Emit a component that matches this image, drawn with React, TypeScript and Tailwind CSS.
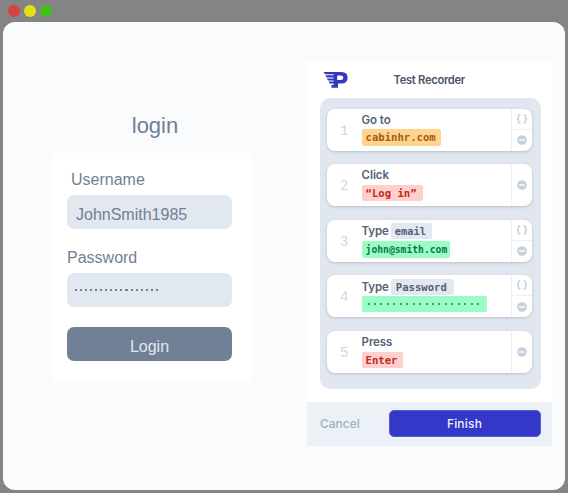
import type { ReactNode } from "react";

const MONO = "font-['DejaVu_Sans_Mono',monospace] font-bold";

function Braces() {
  return (
    <svg width="12" height="10" viewBox="0 0 12 10" fill="none" stroke="#c3cedb" strokeWidth="1.4">
      <path d="M4.4 1H3.7Q2.5 1 2.5 2.1V3.5Q2.5 5 1 5Q2.5 5 2.5 6.5V7.9Q2.5 9 3.7 9H4.4" />
      <path d="M7.6 1H8.3Q9.5 1 9.5 2.1V3.5Q9.5 5 11 5Q9.5 5 9.5 6.5V7.9Q9.5 9 8.3 9H7.6" />
    </svg>
  );
}

function Minus() {
  return (
    <svg width="10" height="10" viewBox="0 0 10 10">
      <circle cx="5" cy="5" r="4.8" fill="#c5d0dd" />
      <rect x="2.2" y="4.2" width="5.6" height="1.6" rx="0.4" fill="#fff" />
    </svg>
  );
}

function Logo() {
  return (
    <svg width="26" height="18" viewBox="0 0 26 18" fill="#3538bd">
      <path d="M0.6 1H12V3.2H2ZM2.4 4.3H12V6.4H3.6ZM3.8 7.5H12V9.5H5ZM5.6 10.6H12V12.6H6.8Z" />
      <path
        fillRule="evenodd"
        d="M10.6 1H18.4Q24.6 1.2 24.6 6.8Q24.6 12.5 18.4 12.6H15V16.7H8.4V14H10.6ZM14.2 4.6V9.1H17.9Q20.3 9 20.3 6.8Q20.3 4.7 17.9 4.6Z"
      />
    </svg>
  );
}

type StepProps = { n: number; title: string; field?: ReactNode; braces?: boolean; children: ReactNode };

function Step({ n, title, field, braces, children }: StepProps) {
  return (
    <div className="flex h-[42px] w-[205.5px] overflow-hidden rounded-[8px] bg-white shadow-[0_1px_3px_rgba(71,85,115,0.28)]">
      <div className="flex w-[35px] items-center justify-center pt-[3px] font-['Liberation_Mono',monospace] text-[14px] text-[#d0d7e1]">{n}</div>
      <div className="flex w-[149.5px] flex-col items-start pt-[3px]">
        <div className="flex h-[17px] items-center gap-[2px] text-[11.5px] font-semibold tracking-[-0.1px] text-[#566176]">
          <span className="pt-px">{title}</span>
          {field}
        </div>
        {children}
      </div>
      <div className="flex flex-1 flex-col border-l border-[#edf1f6]">
        {braces && (
          <div className="flex h-[21px] items-center justify-center border-b border-[#edf1f6]">
            <Braces />
          </div>
        )}
        <div className="flex flex-1 items-center justify-center">
          <Minus />
        </div>
      </div>
    </div>
  );
}

function LoginForm() {
  return (
    <div className="mt-[89px] ml-[49px] w-[200px] text-[16px] text-[#718096]">
      <h1 className="h-[42px] pl-[6px] text-center text-[22px] leading-[30px]">login</h1>
      <div className="h-[228px] rounded-[6px] bg-white px-[15px] pt-[16px]">
        <div className="h-[26px] pl-[4px] leading-[22px]">Username</div>
        <div className="h-[34px] w-[165px] rounded-[7px] bg-[#e2e8f0] pl-[9px] leading-[39px]">JohnSmith1985</div>
        <div className="mt-[17px] h-[27px] leading-[24px]">Password</div>
        <div className="flex h-[34px] w-[165px] items-center gap-[3px] rounded-[7px] bg-[#e2e8f0] pl-[8px]">
          {Array.from({ length: 17 }, (_, i) => (
            <i key={i} className="h-[2px] w-[2.05px] bg-[#718096]" />
          ))}
        </div>
        <button className="mt-[20px] block h-[34px] w-[165px] rounded-[7px] bg-[#718096] pt-[5px] text-[#e2e8f0]">Login</button>
      </div>
    </div>
  );
}

function Recorder() {
  return (
    <div className="mt-[39px] ml-[55px] flex h-[385px] w-[245px] flex-col bg-white font-['Inter',sans-serif]">
      <header className="flex h-[37px] items-center">
        <div className="w-[86.5px] pl-[16px]">
          <Logo />
        </div>
        <h2 className="pt-[2px] text-[11.2px] font-semibold tracking-[-0.3px] text-[#4a5568]">Test Recorder</h2>
      </header>
      <div className="ml-[12.6px] flex h-[291.4px] w-[221px] flex-col gap-[13.6px] rounded-[10px] bg-[#e0e7ef] pt-[10.5px] pl-[7px]">
        <Step n={1} title="Go to" braces>
          <div className={`${MONO} h-[17px] w-[79px] rounded-[2px] bg-[#fed58f] pl-[4px] text-[10.6px] leading-[17px] text-[#a95b10]`}>cabinhr.com</div>
        </Step>
        <Step n={2} title="Click">
          <div className={`${MONO} mt-px h-[16px] w-[61px] rounded-[2px] bg-[#fed0cd] pl-[4px] text-[10.6px] leading-[17px] text-[#c3271f]`}>“Log in”</div>
        </Step>
        <Step
          n={3}
          title="Type"
          braces
          field={<span className={`${MONO} h-[16px] w-[41px] rounded-[2px] bg-[#e2e8f0] pl-[4px] text-[10.4px] leading-[16px] tracking-normal`}>email</span>}
        >
          <div className={`${MONO} mt-[1px] h-[17px] w-[88px] rounded-[2px] bg-[#9cfcc7] pl-[4px] text-[9.7px] leading-[17px] text-[#087a45]`}>john@smith.com</div>
        </Step>
        <Step
          n={4}
          title="Type"
          braces
          field={<span className={`${MONO} h-[16px] w-[63px] rounded-[2px] bg-[#e2e8f0] pl-[5px] text-[10.6px] leading-[16px] tracking-normal`}>Password</span>}
        >
          <div className="mt-px flex h-[16px] w-[125px] items-center gap-[4.45px] rounded-[2px] bg-[#9cfcc7] pl-[6px]">
            {Array.from({ length: 18 }, (_, i) => (
              <i key={i} className="h-[2px] w-[2px] rounded-full bg-[#168154]" />
            ))}
          </div>
        </Step>
        <Step n={5} title="Press">
          <div className={`${MONO} mt-px h-[16px] w-[41px] rounded-[2px] bg-[#fed0cd] pl-[4px] text-[10.6px] leading-[16px] text-[#c3271f]`}>Enter</div>
        </Step>
      </div>
      <footer className="mt-auto flex h-[44px] items-center bg-[#ecf1f8] pb-px">
        <button className="w-[81.5px] pl-[13px] text-left text-[12px] font-medium text-[#a0b0c3]">Cancel</button>
        <button className="h-[27px] w-[152px] rounded-[5px] border border-[#5659cf] bg-[#3438c8] text-[12px] font-medium tracking-[0.2px] text-[#eef0fc]">Finish</button>
      </footer>
    </div>
  );
}

export default function App() {
  return (
    <div className="h-[493px] w-[568px] overflow-hidden bg-[#848484] font-['Liberation_Sans',sans-serif]">
      <div className="flex h-[22px] items-center gap-[4px] pl-[8px]">
        <i className="size-[12px] rounded-full bg-[#d54242]" />
        <i className="size-[12px] rounded-full bg-[#e5df18]" />
        <i className="size-[12px] rounded-full bg-[#41c01b]" />
      </div>
      <main className="ml-[3px] flex h-[468px] w-[562px] items-start rounded-[12px] bg-[#fafbfd]">
        <LoginForm />
        <Recorder />
      </main>
    </div>
  );
}
